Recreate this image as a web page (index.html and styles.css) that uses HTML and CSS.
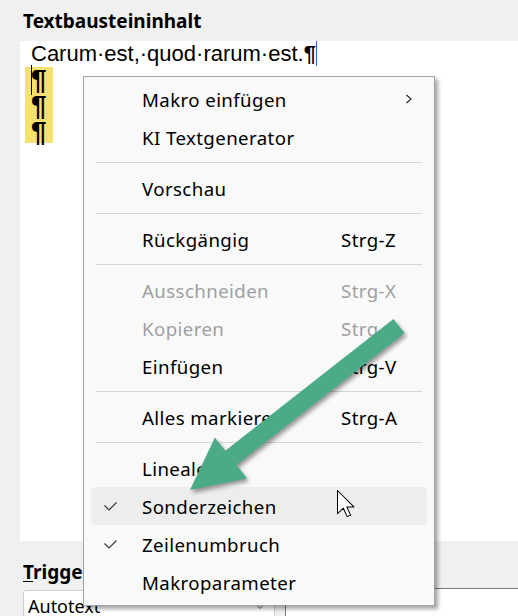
FILE: index.html
```html
<!DOCTYPE html>
<html>
<head>
    <title>Textbaustein</title>
    <link rel="stylesheet" href="styles.css">
</head>
<body>
    <div class="page">
        <div class="label">Textbausteininhalt</div>
        <div class="editor">
            <div class="line first">Carum·est,·quod·rarum·est.<span class="pilcrow">¶</span></div>
            <div class="line">
                <span class="marked">¶<br>¶<br>¶</span>
            </div>
            <span class="caret"></span>
        </div>
        <div class="label trigger"><u>T</u>rigger</div>
        <div class="trigger-row">
            <div class="combo">
                <span>Autotext</span>
                <svg width="12" height="8" viewBox="0 0 12 8"><path d="M1 1.5 L6 6.5 L11 1.5" fill="none" stroke="#555" stroke-width="1"/></svg>
            </div>
            <div class="panel"></div>
        </div>
    </div>

    <div class="menu">
        <div class="item"><span class="check"></span><span>Makro einfügen</span><span class="sub"><svg width="8" height="10" viewBox="0 0 8 10"><path d="M1.5 1 L6 5 L1.5 9" fill="none" stroke="#222" stroke-width="1.1"/></svg></span></div>
        <div class="item"><span class="check"></span><span>KI Textgenerator</span><span></span></div>
        <div class="sep"></div>
        <div class="item"><span class="check"></span><span>Vorschau</span><span></span></div>
        <div class="sep"></div>
        <div class="item"><span class="check"></span><span>Rückgängig</span><span class="key">Strg-Z</span></div>
        <div class="sep"></div>
        <div class="item off"><span class="check"></span><span>Ausschneiden</span><span class="key">Strg-X</span></div>
        <div class="item off"><span class="check"></span><span>Kopieren</span><span class="key">Strg-C</span></div>
        <div class="item"><span class="check"></span><span>Einfügen</span><span class="key">Strg-V</span></div>
        <div class="sep"></div>
        <div class="item"><span class="check"></span><span>Alles markieren</span><span class="key">Strg-A</span></div>
        <div class="sep"></div>
        <div class="item"><span class="check"></span><span>Lineale</span><span></span></div>
        <div class="item hover"><span class="check"><svg width="13" height="9" viewBox="0 0 13 9"><path d="M0.5 3.5 L5 8 L12.5 0.5" fill="none" stroke="#333" stroke-width="1.1"/></svg></span><span>Sonderzeichen</span><span></span></div>
        <div class="item"><span class="check"><svg width="13" height="9" viewBox="0 0 13 9"><path d="M0.5 3.5 L5 8 L12.5 0.5" fill="none" stroke="#333" stroke-width="1.1"/></svg></span><span>Zeilenumbruch</span><span></span></div>
        <div class="item"><span class="check"></span><span>Makroparameter</span><span></span></div>
    </div>

    <!-- Markierungspfeil und Mauszeiger -->
    <svg class="overlay" width="518" height="616" viewBox="0 0 518 616">
        <polygon class="arrow" points="393.4,318.9 225.3,450.8 214.9,437.4 190,490 246.9,478.4 236.5,465 404.6,333.1"/>
        <polygon class="pointer" transform="translate(337.5 490.5) scale(1.45)" points="0,0 0,16 4,12.2 6.7,18 9,17 6.4,11.3 11.3,11.3"/>
    </svg>
</body>
</html>
```

FILE: styles.css
```css
body {
    margin: 0;
    background-color: #f0f0f0;
    font-family: "Noto Sans", sans-serif;
    width: 518px;
    height: 616px;
    overflow: hidden;
}
.page {
    padding-top: 8px;
}
.label {
    font-weight: bold;
    font-size: 19px;
    line-height: 26px;
    padding-left: 23px;
    color: #000;
}
.editor {
    position: relative;
    margin: 7px 0 0 20px;
    height: 500px;
    background-color: #fff;
    font-family: "Liberation Sans", Arial, sans-serif;
    font-size: 22px;
    line-height: 26px;
    padding-left: 5px;
}
.line.first {
    padding-left: 6px;
}
.pilcrow {
    font-weight: bold;
    border-right: 1px solid #2a6fd8;
}
.marked {
    display: inline-block;
    width: 22px;
    padding-left: 6px;
    height: 76px;
    font-size: 28px;
    line-height: 26px;
    font-weight: bold;
    background-color: #f4e16e;
}
.caret {
    position: absolute;
    left: 11px;
    top: 24px;
    width: 1px;
    height: 30px;
    background-color: #000;
}
.trigger {
    margin-top: 18px;
}
.trigger u {
    text-underline-offset: 2px;
}
.trigger-row {
    display: flex;
    margin-top: 3px;
}
.combo {
    display: flex;
    justify-content: space-between;
    align-items: center;
    width: 238px;
    height: 30px;
    margin-left: 23px;
    margin-top: 2px;
    padding: 0 8px 0 4px;
    background-color: #fff;
    border: 1px solid #cfcfcf;
    border-radius: 3px;
    font-size: 18px;
}
.panel {
    flex: 1;
    margin-left: 10px;
    height: 40px;
    background-color: #fff;
    border-top: 1px solid #7a7a7a;
    border-left: 1px solid #7a7a7a;
}
.menu {
    position: absolute;
    left: 83px;
    top: 76px;
    width: 350px;
    padding: 3px 0 4px;
    background-color: #f9f9f9;
    border: 1px solid #a3a3a3;
    box-shadow: 3px 3px 4px rgba(0, 0, 0, 0.35);
    font-size: 18.67px;
    letter-spacing: 0.4px;
    color: #000;
}
.item {
    display: grid;
    grid-template-columns: 51px 1fr 86px;
    align-items: center;
    height: 38px;
    margin: 0 7px;
    border-radius: 4px;
}
.item.off {
    color: #a0a0a0;
}
.item.hover {
    background-color: #ededed;
}
.check svg {
    display: block;
    margin-left: 13px;
}
.sub svg {
    display: block;
    margin-left: 64px;
}
.sep {
    height: 1px;
    margin: 6px 12px;
    background-color: #d6d6d6;
}
.overlay {
    position: absolute;
    left: 0;
    top: 0;
}
.arrow {
    fill: #4bab86;
    filter: drop-shadow(2px 3px 2px rgba(0, 0, 0, 0.4));
}
.pointer {
    fill: #fff;
    stroke: #000;
    stroke-width: 0.7;
    stroke-linejoin: round;
}
```
